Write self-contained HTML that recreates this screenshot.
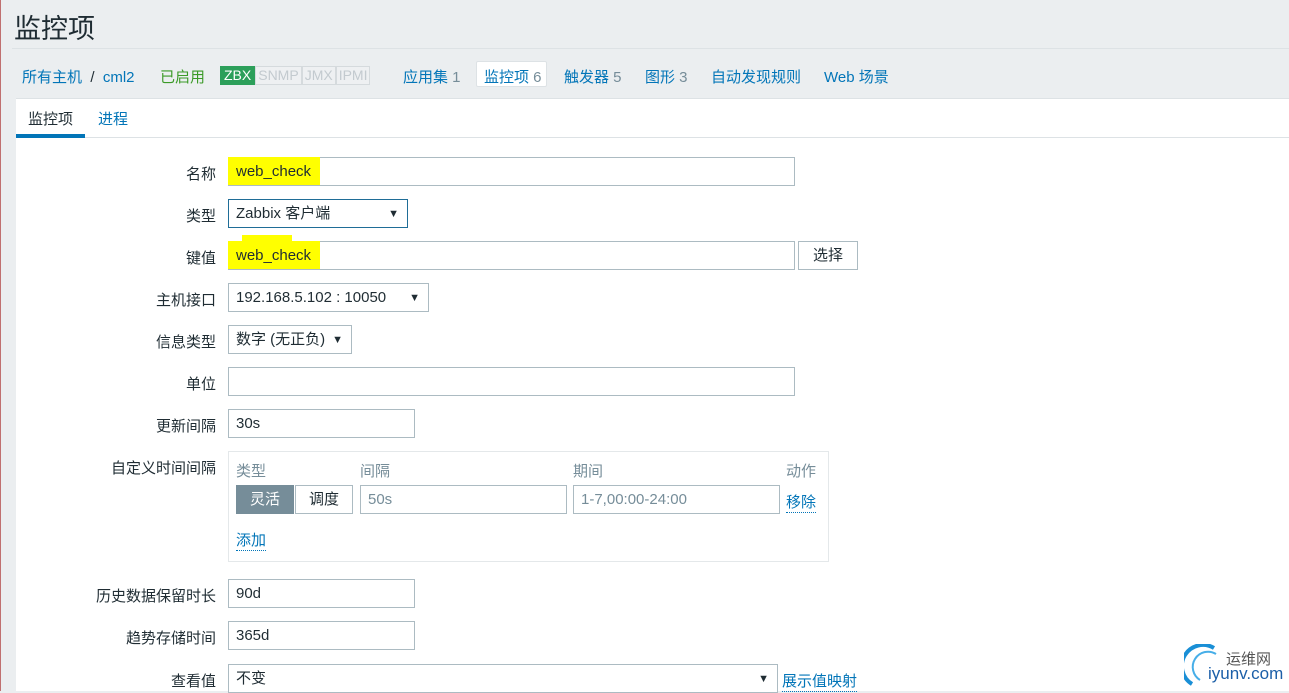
<!DOCTYPE html>
<html><head><meta charset="utf-8"><style>
*{box-sizing:border-box;margin:0;padding:0}
body{width:1289px;height:691px;overflow:hidden;background:#ebeef0;font-family:"Liberation Sans","Noto Sans CJK SC",sans-serif;font-size:15px;color:#1f2c33;position:relative}
.a{position:absolute;white-space:nowrap}
.lbl{position:absolute;right:1073px;white-space:nowrap;color:#1f2c33}
.in{position:absolute;height:29px;border:1px solid #acbbc2;background:#fff;padding-left:7px;line-height:28px;white-space:nowrap}
.sel::after{content:"▼";position:absolute;right:8px;top:0;font-size:11px}
.blue{color:#0275b8}
.hl{position:absolute;background:#ffff00}
.bd{border:1px solid #d5dadd;color:#c3cacf;padding:0 2px;line-height:17px;background:#eef0f2}
</style></head><body>
<div class="a" style="left:0;top:0;width:1px;height:691px;background:#c07070"></div>
<div class="a" style="left:14px;top:7px;font-size:27px;color:#1f2c33">监控项</div>
<div class="a" style="left:12px;top:48px;width:1277px;height:1px;background:#dde2e5"></div>
<div class="a blue" style="left:22px;top:66px">所有主机 <span style="color:#1f2c33">&nbsp;/&nbsp;</span> cml2</div>
<div class="a" style="left:160px;top:66px;color:#3b9a27">已启用</div>
<div class="a" style="left:220px;top:66px;height:19px;font-size:14px;display:flex">
<span style="background:#2c9f5a;color:#fff;padding:0 4px;line-height:19px">ZBX</span><span class="bd">SNMP</span><span class="bd">JMX</span><span class="bd">IPMI</span></div>
<div class="a blue" style="left:403px;top:66px">应用集 <span style="color:#768d99">1</span></div>
<div class="a" style="left:476px;top:61px;width:71px;height:26px;background:#fff;border:1px solid #dde2e5;border-radius:2px"></div>
<div class="a blue" style="left:484px;top:66px">监控项 <span style="color:#768d99">6</span></div>
<div class="a blue" style="left:564px;top:66px">触发器 <span style="color:#768d99">5</span></div>
<div class="a blue" style="left:645px;top:66px">图形 <span style="color:#768d99">3</span></div>
<div class="a blue" style="left:711px;top:66px">自动发现规则</div>
<div class="a blue" style="left:824px;top:66px">Web 场景</div>

<div class="a" style="left:16px;top:98px;width:1273px;height:593px;background:#fff;border-top:1px solid #dde2e5"></div>
<div class="a" style="left:16px;top:137px;width:1273px;height:1px;background:#dde2e5"></div>
<div class="a" style="left:28px;top:108px">监控项</div>
<div class="a" style="left:16px;top:134px;width:69px;height:4px;background:#0275b8"></div>
<div class="a blue" style="left:98px;top:108px">进程</div>

<div class="lbl" style="top:163px">名称</div>
<div class="in" style="left:228px;top:157px;width:567px"></div>
<div class="hl" style="left:228px;top:157px;width:92px;height:28px"></div>
<div class="a" style="left:236px;top:163px">web_check</div>

<div class="lbl" style="top:205px">类型</div>
<div class="in sel" style="left:228px;top:199px;width:180px;border-color:#1f6d97">Zabbix 客户端</div>

<div class="lbl" style="top:247px">键值</div>
<div class="in" style="left:228px;top:241px;width:567px"></div>
<div class="hl" style="left:228px;top:241px;width:92px;height:28px"></div>
<div class="hl" style="left:242px;top:235px;width:50px;height:7px"></div>
<div class="a" style="left:236px;top:247px">web_check</div>
<div class="in" style="left:798px;top:241px;width:60px;padding:0;text-align:center;background:#fff">选择</div>

<div class="lbl" style="top:289px">主机接口</div>
<div class="in sel" style="left:228px;top:283px;width:201px">192.168.5.102 : 10050</div>

<div class="lbl" style="top:331px">信息类型</div>
<div class="in sel" style="left:228px;top:325px;width:124px">数字 (无正负)</div>

<div class="lbl" style="top:373px">单位</div>
<div class="in" style="left:228px;top:367px;width:567px"></div>

<div class="lbl" style="top:415px">更新间隔</div>
<div class="in" style="left:228px;top:409px;width:187px">30s</div>

<div class="lbl" style="top:457px">自定义时间间隔</div>
<div class="a" style="left:228px;top:451px;width:601px;height:111px;border:1px solid #e4e8ea"></div>
<div class="a" style="left:236px;top:460px;color:#768d99">类型</div>
<div class="a" style="left:360px;top:460px;color:#768d99">间隔</div>
<div class="a" style="left:573px;top:460px;color:#768d99">期间</div>
<div class="a" style="left:786px;top:460px;color:#768d99">动作</div>
<div class="a" style="left:236px;top:485px;width:58px;height:29px;background:#768d99;color:#fff;text-align:center;line-height:29px">灵活</div>
<div class="in" style="left:295px;top:485px;width:58px;padding:0;text-align:center">调度</div>
<div class="in" style="left:360px;top:485px;width:207px;color:#768d99">50s</div>
<div class="in" style="left:573px;top:485px;width:207px;color:#768d99">1-7,00:00-24:00</div>
<div class="a blue" style="left:786px;top:491px;border-bottom:1px dotted #0275b8">移除</div>
<div class="a blue" style="left:236px;top:529px;border-bottom:1px dotted #0275b8">添加</div>

<div class="lbl" style="top:585px">历史数据保留时长</div>
<div class="in" style="left:228px;top:579px;width:187px">90d</div>
<div class="lbl" style="top:627px">趋势存储时间</div>
<div class="in" style="left:228px;top:621px;width:187px">365d</div>
<div class="lbl" style="top:670px">查看值</div>
<div class="in sel" style="left:228px;top:664px;width:550px">不变</div>
<div class="a blue" style="left:782px;top:670px;border-bottom:1px dotted #0275b8">展示值映射</div>

<svg class="a" style="left:1184px;top:644px" width="40" height="46" viewBox="0 0 40 46"><path d="M30 4 A20 20 0 0 0 8 40" stroke="#1a8fd6" stroke-width="4" fill="none"/><path d="M32 10 A14 14 0 0 0 16 36" stroke="#46aee8" stroke-width="2" fill="none"/></svg>
<div class="a" style="left:1226px;top:648px;font-size:15px;color:#555">运维网</div>
<div class="a" style="left:1208px;top:664px;font-size:17px;color:#1b5fa8">iyunv.com</div>
</body></html>
